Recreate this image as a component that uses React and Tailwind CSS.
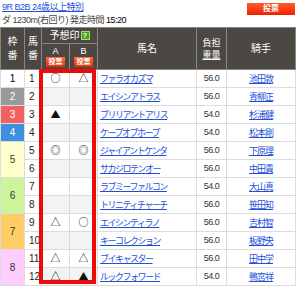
import React from 'react';

const horses = [
  { waku: 1, no: 1, a: '○', b: '△', name: 'ファラオカズマ', kg: '56.0', jockey: '池田敦' },
  { waku: 2, no: 2, a: '', b: '', name: 'エイシンアトラス', kg: '56.0', jockey: '青柳正' },
  { waku: 3, no: 3, a: '▲', b: '', name: 'ブリリアントアリス', kg: '54.0', jockey: '杉浦健' },
  { waku: 4, no: 4, a: '', b: '', name: 'ケープオブホープ', kg: '54.0', jockey: '松本剛' },
  { waku: 5, no: 5, a: '◎', b: '◎', name: 'ジャイアントケンタ', kg: '56.0', jockey: '下原理' },
  { waku: 5, no: 6, a: '', b: '', name: 'サカジロテンオー', kg: '56.0', jockey: '中田貴' },
  { waku: 6, no: 7, a: '', b: '', name: 'ラブミーファルコン', kg: '54.0', jockey: '大山真' },
  { waku: 6, no: 8, a: '', b: '', name: 'トリニティチャーチ', kg: '56.0', jockey: '笹田知' },
  { waku: 7, no: 9, a: '△', b: '○', name: 'エイシンティラノ', kg: '56.0', jockey: '吉村智' },
  { waku: 7, no: 10, a: '', b: '', name: 'キーコレクション', kg: '56.0', jockey: '板野央' },
  { waku: 8, no: 11, a: '△', b: '△', name: 'ブイキャスター', kg: '56.0', jockey: '田中学' },
  { waku: 8, no: 12, a: '△', b: '▲', name: 'ルックフォワード', kg: '54.0', jockey: '鴨宮祥' },
];

// frame colours: bg + text
const wakuStyle = {
  1: 'bg-white text-black',
  2: 'bg-[#999999] text-white',
  3: 'bg-[#f06262] text-white',
  4: 'bg-[#3d8fe0] text-white',
  5: 'bg-[#ffffcc] text-[#333]',
  6: 'bg-[#ccf59a] text-[#333]',
  7: 'bg-[#ffcc66] text-[#333]',
  8: 'bg-[#ffccff] text-[#333]',
};

const VoteButton = () => (
  <span className="inline-flex items-center justify-center w-[19px] h-[10px] bg-gradient-to-b from-[#ff6a3a] to-[#e62800] text-white text-[7px] font-bold leading-none">
    投票
  </span>
);

const Mark = ({ m }) => (
  <span className="font-['Noto_Sans_CJK_JP',sans-serif] text-[10px] leading-none text-[#111]">{m}</span>
);

const App = () => {
  return (
    <div className="relative w-[300px] h-[288px] bg-white font-['Liberation_Sans','Noto_Sans_CJK_JP',sans-serif] overflow-hidden">
      {/* race title */}
      <div className="flex justify-between pl-[2px] pr-[5px] pt-[1px] h-[27px]">
        <div className="flex flex-col">
          <a href="#" className="text-[9px] leading-[13px] tracking-[-0.5px] text-[#1f4fd8] underline">9R B2B 24歳以上特別</a>
          <div className="text-[9px] leading-[12px] tracking-[-0.5px] text-[#444]">
            ダ 1230m(右回り) 発走時間 <span className="text-black">15:20</span>
          </div>
        </div>
        <button className="mt-[2px] w-[48px] h-[12px] bg-gradient-to-b from-[#ff5a2a] to-[#f01800] text-white text-[8px] font-bold leading-none flex items-center justify-center">
          投票
        </button>
      </div>

      {/* entries table */}
      <table className="w-[295px] table-fixed border-collapse text-[10px]">
        <colgroup>
          <col className="w-[24px]" />
          <col className="w-[17px]" />
          <col className="w-[28px]" />
          <col className="w-[28px]" />
          <col className="w-[99px]" />
          <col className="w-[30px]" />
          <col className="w-[69px]" />
        </colgroup>
        <thead className="bg-[#4b4843] text-white">
          <tr className="h-[16px]">
            <th rowSpan={2} className="border border-[#8a867f] font-normal leading-[14px] text-[10px]">枠<br />番</th>
            <th rowSpan={2} className="border border-[#8a867f] font-normal leading-[14px] text-[10px]">馬<br />番</th>
            <th colSpan={2} className="border border-[#8a867f] font-normal leading-none text-[10px]">
              <span className="inline-flex items-center gap-[1px]">
                予想印
                <span className="inline-flex items-center justify-center w-[9px] h-[9px] bg-[#4a9e1a] text-white text-[7px] font-bold border border-[#a8d880]">?</span>
              </span>
            </th>
            <th rowSpan={2} className="border border-[#8a867f] font-normal text-[10px]">馬名</th>
            <th rowSpan={2} className="border border-[#8a867f] font-normal leading-[12px] text-[9px]">負担<br /><span className="underline">重量</span></th>
            <th rowSpan={2} className="border border-[#8a867f] font-normal text-[10px]">騎手</th>
          </tr>
          <tr className="h-[26px]">
            <th className="border border-[#8a867f] font-normal text-[9px] leading-[10px]">
              <div>A</div>
              <VoteButton />
            </th>
            <th className="border border-[#8a867f] font-normal text-[9px] leading-[10px]">
              <div>B</div>
              <VoteButton />
            </th>
          </tr>
        </thead>
        <tbody>
          {horses.map((h, i) => {
            const first = i === 0 || horses[i - 1].waku !== h.waku;
            const span = horses.filter((x) => x.waku === h.waku).length;
            const stripe = i % 2 === 1 ? 'bg-[#f3f3f3]' : 'bg-white';
            return (
              <tr key={h.no} className="h-[18px]">
                {first && (
                  <td rowSpan={span} className={`border border-[#dcdcdc] text-center ${wakuStyle[h.waku]}`}>
                    {h.waku}
                  </td>
                )}
                <td className="border border-[#dcdcdc] bg-white text-[#222] pl-[4px]">{h.no}</td>
                <td className={`border border-[#dcdcdc] text-center ${stripe}`}><Mark m={h.a} /></td>
                <td className={`border border-[#dcdcdc] text-center ${stripe}`}><Mark m={h.b} /></td>
                <td className="border border-[#dcdcdc] bg-white pl-[2px] whitespace-nowrap overflow-hidden">
                  <a href="#" className="text-[9px] tracking-[-1.5px] text-[#1f4fd8] underline">{h.name}</a>
                </td>
                <td className="border border-[#dcdcdc] bg-white text-center text-[#333] text-[9px] tracking-[-0.5px]">{h.kg}</td>
                <td className="border border-[#dcdcdc] bg-white text-center">
                  <a href="#" className="text-[9px] tracking-[-1px] text-[#1f4fd8] underline">{h.jockey}</a>
                </td>
              </tr>
            );
          })}
        </tbody>
      </table>

      {/* highlight around prediction marks */}
      <div className="absolute left-[39px] top-[69px] w-[57px] h-[215px] border-4 border-[#ee0a0a] pointer-events-none" />
    </div>
  );
};

export default App;
